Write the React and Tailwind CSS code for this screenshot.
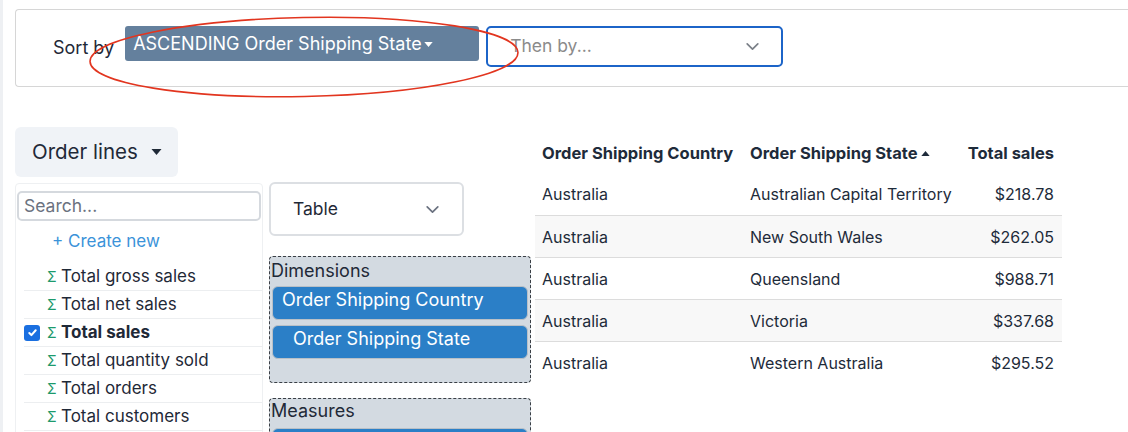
import React from 'react';

const font = { fontFamily: 'Inter, "Liberation Sans", sans-serif' };

const measures = [
  { name: 'Total gross sales' },
  { name: 'Total net sales' },
  { name: 'Total sales', checked: true },
  { name: 'Total quantity sold' },
  { name: 'Total orders' },
  { name: 'Total customers' },
];

const rows = [
  ['Australia', 'Australian Capital Territory', '$218.78'],
  ['Australia', 'New South Wales', '$262.05'],
  ['Australia', 'Queensland', '$988.71'],
  ['Australia', 'Victoria', '$337.68'],
  ['Australia', 'Western Australia', '$295.52'],
];

function Chevron({ className }) {
  return (
    <svg viewBox="0 0 16 16" className={className} fill="none" stroke="currentColor" strokeWidth="1.6" strokeLinecap="round" strokeLinejoin="round">
      <path d="M3 5.5l5 5 5-5" />
    </svg>
  );
}

function Caret({ className }) {
  return (
    <svg viewBox="0 0 10 6" className={className} fill="currentColor">
      <path d="M0 0h10L5 6z" />
    </svg>
  );
}

function Pill({ children, indent }) {
  return (
    <div className="mx-[2px] mb-[5px] rounded-[6px] border border-[#b9c0c7] bg-[#2b7fc7]">
      <div className={`h-[32px] text-[18px] leading-[26px] text-white ${indent ? 'pl-[20px]' : 'pl-[9px]'}`}>
        {children}
      </div>
    </div>
  );
}

export default function App() {
  return (
    <div className="relative h-[432px] w-[1128px] overflow-hidden border-l-[3px] border-[#eef0f3] bg-white text-[#1f2937]" style={font}>
      {/* sort bar */}
      <div className="ml-[12px] mt-[9px] flex h-[78px] items-start rounded-tl-[4px] rounded-bl-[4px] border border-r-0 border-[#d6d6d6] pl-[37px] pt-[16px]">
        <span className="mt-[12px] text-[18px] leading-[20px] text-[#1f2937]">Sort by</span>
        <button className="ml-[11px] flex h-[35px] w-[354px] items-center rounded-[3px] bg-[#64809d] pl-[8px] text-[18px] text-white">
          ASCENDING Order Shipping State
          <Caret className="ml-[2px] mt-[1px] h-[5px] w-[9px]" />
        </button>
        <div className="ml-[7px] flex h-[41px] w-[297px] items-center justify-between rounded-[5px] border-2 border-[#1c64c8] pl-[22px] pr-[20px]">
          <span className="text-[17.5px] text-[#8b8b8b]">Then by...</span>
          <Chevron className="h-[17px] w-[17px] text-[#7b8088]" />
        </div>
      </div>

      {/* main */}
      <div className="mt-[40px] ml-[12px] flex items-start">
        {/* left column */}
        <div className="w-[248px]">
          <button className="flex h-[50px] w-[163px] items-center rounded-[6px] bg-[#f0f3f7] pl-[17px] text-[20.5px] text-[#1f2937]">
            Order lines
            <Caret className="ml-[13px] h-[6px] w-[11px]" />
          </button>
          <div className="mt-[6px] h-[260px] rounded-[4px] border border-[#eef0f2] pt-[7px]">
            <div className="mx-[1px] flex h-[30px] items-center rounded-[5px] border-2 border-[#d5d9de] px-[5px] text-[17.5px] text-[#6b7280]">
              Search...
            </div>
            <div className="flex h-[42px] items-center pl-[36px] text-[17px] text-[#3b93d9]">+ Create new</div>
            {measures.map((m) => (
              <div key={m.name} className="ml-[8px] flex h-[28px] items-center border-b border-[#eceef0]">
                <div className="flex w-[23px] items-center">
                  {m.checked && (
                    <span className="flex h-[16px] w-[16px] items-center justify-center rounded-[3px] bg-[#1a6fe0]">
                      <svg viewBox="0 0 12 12" className="h-[11px] w-[11px]" fill="none" stroke="white" strokeWidth="2.2" strokeLinecap="round" strokeLinejoin="round">
                        <path d="M2.5 6.5l2.3 2.3 4.7-5.3" />
                      </svg>
                    </span>
                  )}
                </div>
                <span className="w-[14px] text-[14px] text-[#1d9a6c]">Σ</span>
                <span className={`text-[17px] text-[#1f2937] ${m.checked ? 'font-bold' : ''}`}>{m.name}</span>
              </div>
            ))}
          </div>
        </div>

        {/* middle column */}
        <div className="ml-[6px] mt-[55px] w-[262px]">
          <div className="flex h-[54px] w-[195px] items-center justify-between rounded-[6px] border-2 border-[#dcdfe3] pl-[22px] pr-[21px]">
            <span className="text-[17.5px] text-[#1f2937]">Table</span>
            <Chevron className="h-[17px] w-[17px] text-[#6b7280]" />
          </div>
          <div className="mt-[20px] h-[127px] rounded-[4px] border border-dashed border-[#3a3f45] bg-[#d3dae1]">
            <div className="h-[29px] pl-[1px] pt-[3px] text-[18px] leading-[22px] text-[#1f2937]">Dimensions</div>
            <Pill>Order Shipping Country</Pill>
            <Pill indent>Order Shipping State</Pill>
          </div>
          <div className="mt-[15px] h-[60px] rounded-[4px] border border-dashed border-[#3a3f45] bg-[#d3dae1]">
            <div className="h-[29px] pl-[1px] pt-[1px] text-[18px] leading-[22px] text-[#1f2937]">Measures</div>
            <Pill>&nbsp;</Pill>
          </div>
        </div>

        {/* data table */}
        <div className="ml-[4px] mt-[6px] w-[527px] text-[#1e2b3a]">
          <div className="flex h-[40px] items-center text-[16.5px] font-bold">
            <div className="w-[208px] whitespace-nowrap pl-[7px]">Order Shipping Country</div>
            <div className="flex w-[210px] items-center whitespace-nowrap pl-[7px]">
              Order Shipping State
              <Caret className="ml-[3px] h-[5px] w-[9px] rotate-180" />
            </div>
            <div className="flex-1 pr-[8px] text-right">Total sales</div>
          </div>
          {rows.map((r, i) => (
            <div
              key={r[1]}
              className={`flex h-[42px] items-center text-[16px] ${i > 0 ? 'border-t border-[#dcdcdc]' : ''} ${i % 2 === 1 ? 'bg-[#f8f8f8]' : ''}`}
            >
              <div className="w-[208px] pl-[7px]">{r[0]}</div>
              <div className="w-[210px] whitespace-nowrap pl-[7px]">{r[1]}</div>
              <div className="flex-1 pr-[8px] text-right">{r[2]}</div>
            </div>
          ))}
        </div>
      </div>

      {/* hand-drawn annotation */}
      <svg className="pointer-events-none absolute left-0 top-0" width="1128" height="432">
        <ellipse cx="301" cy="57" rx="214" ry="39.5" fill="none" stroke="#e2351f" strokeWidth="1.6" transform="rotate(-1.2 301 57)" />
      </svg>
    </div>
  );
}
